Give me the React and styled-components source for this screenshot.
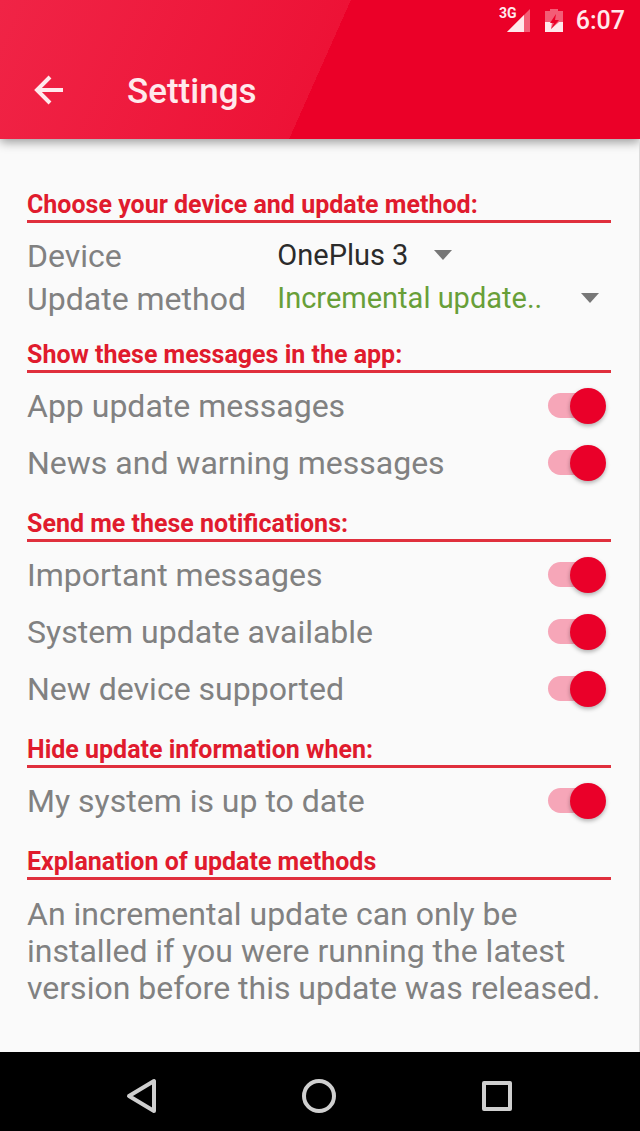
import React, { useState } from 'react';
import styled, { createGlobalStyle } from 'styled-components';

const GlobalStyle = createGlobalStyle`
    *{
        box-sizing:border-box;
    }

    body{
        margin:0;
        background-color:#fafafa;
        font-family:Roboto, "Liberation Sans", sans-serif;
    }
`;

const Screen = styled.div`
    display:flex;
    flex-direction:column;
    min-height:100vh;
`;

const Header = styled.header`
    color:#ffe9ec;
    background:linear-gradient(114deg, #f02446 0%, #ed1236 50%, #eb0028 50%);
    box-shadow:0 3px 10px rgba(0, 0, 0, .4);
`;

const StatusBar = styled.div`
    display:flex;
    align-items:center;
    justify-content:flex-end;
    height:40px;
    padding-right:15px;
    font-size:25px;
    font-weight:500;

    svg{
        margin-right:11px;
    }
`;

const AppBar = styled.div`
    display:flex;
    align-items:center;
    height:99px;
    padding:0 28px;
    gap:59px;
`;

const BackButton = styled.button`
    display:flex;
    padding:4px;
    border:0;
    background:none;
    color:inherit;
`;

const Title = styled.h1`
    margin:0;
    padding-top:4px;
    font-size:35px;
    font-weight:500;
    line-height:44px;
`;

const Content = styled.main`
    flex:1;
    padding:33px 28px 45px 27px;
    border-right:1px solid #dcdcdc;
`;

const SectionTitle = styled.h2`
    margin:0;
    padding-top:18px;
    border-bottom:3px solid #e0303d;
    color:#e01b2d;
    font-size:25px;
    font-weight:700;
    line-height:30px;
`;

const Choices = styled.div`
    padding:11px 0 2px;
`;

const ChoiceRow = styled.div`
    display:grid;
    grid-template-columns:3fr 4fr;
    align-items:center;
    height:43px;
    color:#818181;
    font-size:32px;
`;

const SelectBox = styled.div`
    display:grid;
    align-items:center;
    justify-self:${props => props.$wide ? 'stretch' : 'start'};
    padding-bottom:2px;

    select{
        grid-area:1 / 1;
        field-sizing:content;
        width:100%;
        padding:0 56px 0 0;
        border:0;
        appearance:none;
        background:none;
        color:${props => props.$color};
        font-family:inherit;
        font-size:29px;
        line-height:40px;
    }

    svg{
        grid-area:1 / 1;
        justify-self:end;
        margin-right:12px;
        pointer-events:none;
    }
`;

const Switches = styled.div`
    padding-top:4px;
`;

const SwitchRow = styled.label`
    display:flex;
    align-items:center;
    justify-content:space-between;
    height:57px;
    padding-right:5px;
    color:#818181;
    font-size:32px;
`;

const Toggle = styled.input`
    display:grid;
    align-items:center;
    width:58px;
    height:36px;
    margin:0;
    appearance:none;

    &::before{
        grid-area:1 / 1;
        content:'';
        width:50px;
        height:25px;
        border-radius:13px;
        background-color:#c4c4c4;
    }

    &::after{
        grid-area:1 / 1;
        content:'';
        width:36px;
        height:36px;
        border-radius:50%;
        background-color:#f1f1f1;
        box-shadow:0 2px 4px rgba(0, 0, 0, .3);
    }

    &:checked::before{
        background-color:#f6a6b8;
    }

    &:checked::after{
        justify-self:end;
        background-color:#ea0029;
    }
`;

const Explanation = styled.p`
    margin:0;
    padding-top:16px;
    color:#818181;
    font-size:32px;
    line-height:37px;
`;

const NavBar = styled.nav`
    display:grid;
    grid-template-columns:repeat(3, 1fr);
    height:79px;
    padding:9px 53px 0;
    background-color:#000;
`;

const NavButton = styled.button`
    display:flex;
    align-items:center;
    justify-content:center;
    padding:0;
    border:0;
    background:none;
    color:#cfcfcf;
`;

const Arrow = () => (
    <svg width="18" height="10" viewBox="0 0 18 10" fill="#777">
        <path d="M0 0H18L9 10Z"/>
    </svg>
);

const sections = [
    { title: 'Show these messages in the app:', items: ['App update messages', 'News and warning messages'] },
    { title: 'Send me these notifications:', items: ['Important messages', 'System update available', 'New device supported'] },
    { title: 'Hide update information when:', items: ['My system is up to date'] },
];

function Setting({ name }) {
    const [on, setOn] = useState(true);
    return (
        <SwitchRow>
            {name}
            <Toggle type="checkbox" role="switch" checked={on} onChange={e => setOn(e.target.checked)}/>
        </SwitchRow>
    );
}

export default function App() {
    return (
        <Screen>
            <GlobalStyle/>
            <Header>
                <StatusBar>
                    <svg width="66" height="28" viewBox="0 0 66 28" fill="currentColor">
                        <text x="0" y="12" fontSize="14" fontWeight="700">3G</text>
                        <path d="M31 3V26H8Z" opacity=".4"/>
                        <path d="M25 9V26H8Z"/>
                        <path d="M51 3H59V5H64V26H46V5H51Z" opacity=".4"/>
                        <path d="M46 16H53L52 23L60 16H64V26H46Z"/>
                        <path d="M57 8L51 17H55L52 23L60 14H56Z" fill="#eb0028"/>
                    </svg>
                    <span>6:07</span>
                </StatusBar>
                <AppBar>
                    <BackButton aria-label="Back">
                        <svg width="32" height="32" viewBox="0 0 32 32" fill="none" stroke="currentColor" strokeWidth="4">
                            <path d="M31 16H5M18 3L5 16L18 29"/>
                        </svg>
                    </BackButton>
                    <Title>Settings</Title>
                </AppBar>
            </Header>

            <Content>
                <SectionTitle>Choose your device and update method:</SectionTitle>
                <Choices>
                    <ChoiceRow>
                        <label htmlFor="device">Device</label>
                        <SelectBox $color="#2b2b2b">
                            <select id="device"><option>OnePlus 3</option></select>
                            <Arrow/>
                        </SelectBox>
                    </ChoiceRow>
                    <ChoiceRow>
                        <label htmlFor="method">Update method</label>
                        <SelectBox $wide $color="#689f38">
                            <select id="method"><option>Incremental update..</option></select>
                            <Arrow/>
                        </SelectBox>
                    </ChoiceRow>
                </Choices>

                {sections.map(section => (
                    <section key={section.title}>
                        <SectionTitle>{section.title}</SectionTitle>
                        <Switches>
                            {section.items.map(item => <Setting key={item} name={item}/>)}
                        </Switches>
                    </section>
                ))}

                <SectionTitle>Explanation of update methods</SectionTitle>
                <Explanation>
                    An incremental update can only be installed if you were running the latest version before this update was released.
                </Explanation>
            </Content>

            <NavBar>
                <NavButton aria-label="Back">
                    <svg width="36" height="36" viewBox="0 0 36 36" fill="none" stroke="currentColor" strokeWidth="4" strokeLinejoin="round">
                        <path d="M30 3V33L5 18Z"/>
                    </svg>
                </NavButton>
                <NavButton aria-label="Home">
                    <svg width="36" height="36" viewBox="0 0 36 36" fill="none" stroke="currentColor" strokeWidth="4">
                        <circle cx="17" cy="18" r="15"/>
                    </svg>
                </NavButton>
                <NavButton aria-label="Recent apps">
                    <svg width="36" height="36" viewBox="0 0 36 36" fill="none" stroke="currentColor" strokeWidth="4" strokeLinejoin="round">
                        <path d="M4 5H30V31H4Z"/>
                    </svg>
                </NavButton>
            </NavBar>
        </Screen>
    );
}
